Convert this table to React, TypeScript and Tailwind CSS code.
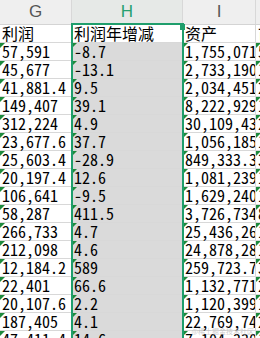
import React from 'react';

type Row = { g: string; h: string; i: string; j: string };

const rows: Row[] = [
  { g: '57,591', h: '-8.7', i: '1,755,071', j: '5,112' },
  { g: '45,677', h: '-13.1', i: '2,733,190', j: '1,203' },
  { g: '41,881.4', h: '9.5', i: '2,034,451', j: '2,781' },
  { g: '149,407', h: '39.1', i: '8,222,929', j: '1,530' },
  { g: '312,224', h: '4.9', i: '30,109,432', j: '2,044' },
  { g: '23,677.6', h: '37.7', i: '1,056,185', j: '1,377' },
  { g: '25,603.4', h: '-28.9', i: '849,333.3', j: '3,419' },
  { g: '20,197.4', h: '12.6', i: '1,081,239', j: '1,006' },
  { g: '106,641', h: '-9.5', i: '1,629,240', j: '1,925' },
  { g: '58,287', h: '411.5', i: '3,726,734', j: '8,650' },
  { g: '266,733', h: '4.7', i: '25,436,261', j: '1,299' },
  { g: '212,098', h: '4.6', i: '24,878,281', j: '1,811' },
  { g: '12,184.2', h: '589', i: '259,723.7', j: '3,040' },
  { g: '22,401', h: '66.6', i: '1,132,771', j: '2,558' },
  { g: '20,107.6', h: '2.2', i: '1,120,399', j: '1,743' },
  { g: '187,405', h: '4.1', i: '22,769,741', j: '2,186' },
  { g: '47,411.4', h: '14.6', i: '7,104,330', j: '1,902' },
];

const cellFont = {
  fontFamily: '"Noto Sans Mono CJK SC", "Liberation Mono", "Noto Sans CJK SC", monospace',
};

const Flag = () => (
  <span className="absolute left-0 top-0 w-0 h-0 border-t-[5px] border-t-[#1d8a3c] border-r-[5px] border-r-transparent" />
);

const Cell = ({
  w,
  text,
  flag,
  bg = 'bg-white',
}: {
  w: string;
  text: string;
  flag?: boolean;
  bg?: string;
}) => (
  <div
    className={`relative ${w} ${bg} shrink-0 h-[18px] border-r border-b border-[#d8d8d8] overflow-x-clip whitespace-nowrap pl-[2px] text-[16px] leading-[17px] text-black`}
  >
    {flag && <Flag />}
    {text}
  </div>
);

export default function App() {
  return (
    <div
      className="relative w-[260px] h-[338px] overflow-hidden bg-white"
      style={cellFont}
    >
      {/* column headers */}
      <div
        className="flex h-[25px] bg-[#efefef] border-b border-[#d4d4d4] text-[17px] text-[#555]"
        style={{ fontFamily: '"Liberation Sans", Arial, sans-serif' }}
      >
        <div className="w-[72px] shrink-0 flex items-center justify-center border-r border-[#d8d8d8]">G</div>
        <div className="w-[111px] shrink-0 flex items-center justify-center border-r border-[#d8d8d8] bg-[#e6e9e7] text-[#26a070]">H</div>
        <div className="w-[73px] shrink-0 flex items-center justify-center border-r border-[#d8d8d8]">I</div>
        <div className="w-[60px] shrink-0" />
      </div>

      {/* title row */}
      <div className="flex">
        <Cell w="w-[72px]" text="利润" />
        <Cell w="w-[111px]" text="利润年增减" />
        <Cell w="w-[73px]" text="资产" />
        <Cell w="w-[60px]" text="市值" />
      </div>

      {rows.map((r, idx) => (
        <div key={idx} className="flex">
          <Cell w="w-[72px]" text={r.g} flag />
          <Cell w="w-[111px]" text={r.h} flag bg="bg-[#dadada]" />
          <Cell w="w-[73px]" text={r.i} flag />
          <Cell w="w-[60px]" text={r.j} flag />
        </div>
      ))}

      {/* selection box over column H */}
      <div className="absolute left-[71px] top-[23px] w-[113px] h-[330px] border-2 border-[#1f9e6c] pointer-events-none" />
      <div className="absolute left-[180px] top-[24px] w-[5px] h-[6px] bg-[#1f9e6c]" />

      {/* watermark */}
      <div
        className="absolute right-[6px] bottom-[2px] text-[7px] text-[#b8b8b8]/70"
        style={{ fontFamily: '"Noto Sans CJK SC", sans-serif' }}
      >
        @稀土掘金技术社区
      </div>
    </div>
  );
}
